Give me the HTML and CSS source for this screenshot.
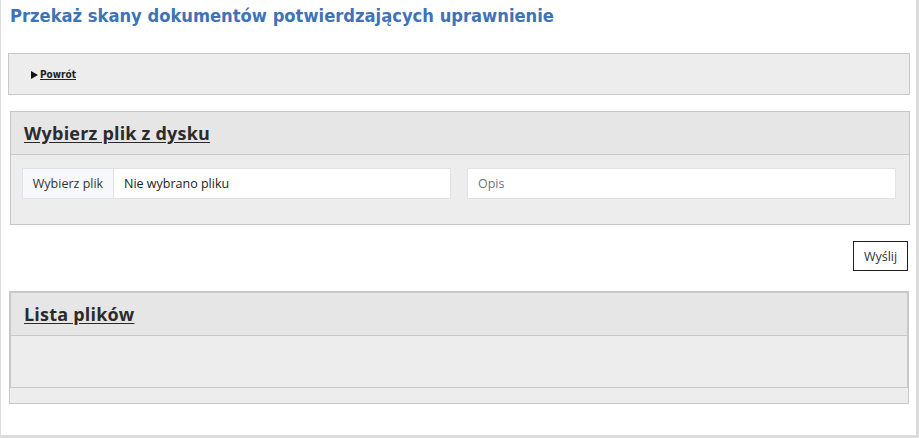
FILE: index.html
```html
<!DOCTYPE html>
<html lang="pl">
<head>
<meta charset="utf-8">
<title>Przekaż skany dokumentów</title>
<link rel="stylesheet" href="styles.css">
</head>
<body>
<div class="frame">
  <h1 class="title">Przekaż skany dokumentów potwierdzających uprawnienie</h1>
  <div class="nav-panel">
    <span class="arrow"></span><a class="back" href="#">Powrót</a>
  </div>
  <div class="panel upload">
    <div class="panel-head"><span class="panel-title">Wybierz plik z dysku</span></div>
    <div class="panel-body">
      <div class="fields">
        <div class="file-group">
          <span class="addon">Wybierz plik</span>
          <span class="file-name">Nie wybrano pliku</span>
        </div>
        <div class="desc">Opis</div>
      </div>
    </div>
  </div>
  <div class="actions">
    <button class="send" type="button">Wyślij</button>
  </div>
  <div class="list-wrap">
    <div class="panel list">
      <div class="panel-head"><span class="panel-title">Lista plików</span></div>
      <div class="panel-body list-body"></div>
    </div>
  </div>
</div>
</body>
</html>
```

FILE: styles.css
```css
html, body {
  margin: 0;
  padding: 0;
  background: #fff;
}
.frame {
  width: 919px;
  height: 438px;
  box-sizing: border-box;
  border-left: 1px solid #dcdcdc;
  border-right: 3px solid #dcdcdc;
  border-bottom: 3px solid #dcdcdc;
  padding: 0 6px 0 7px;
  font-family: "Open Sans", "Noto Sans", sans-serif;
  color: #333;
}
.title {
  margin: 0;
  height: 53px;
  box-sizing: border-box;
  padding: 4px 0 0 2px;
  font-family: "DejaVu Sans Condensed", "DejaVu Sans", Tahoma, sans-serif;
  font-stretch: condensed;
  font-weight: bold;
  font-size: 18.2px;
  line-height: 24px;
  color: #3e73b6;
}
.nav-panel {
  height: 42px;
  box-sizing: border-box;
  border: 1px solid #c8c8c8;
  background: #ededed;
  display: flex;
  align-items: center;
  padding: 1px 0 0 22px;
}
.arrow {
  width: 0;
  height: 0;
  border-top: 4px solid transparent;
  border-bottom: 4px solid transparent;
  border-left: 7px solid #111;
  margin-right: 2px;
}
.back {
  font-family: "DejaVu Sans Condensed", "DejaVu Sans", Tahoma, sans-serif;
  font-stretch: condensed;
  font-weight: bold;
  font-size: 10px;
  color: #222;
  text-decoration: underline;
}
.panel {
  border: 1px solid #c8c8c8;
  background: #ededed;
}
.upload {
  margin: 16px 0 0 2px;
}
.panel-head {
  height: 43px;
  box-sizing: border-box;
  background: #e6e6e6;
  border-bottom: 1px solid #c8c8c8;
  display: flex;
  align-items: center;
  padding: 0 0 0 13px;
}
.panel-title {
  font-size: 18px;
  font-weight: bold;
  color: #2b2b2b;
  text-decoration: underline;
  text-underline-offset: 2px;
  letter-spacing: 0.2px;
}
.panel-body {
  height: 69px;
  box-sizing: border-box;
  padding: 13px 12px 0 11px;
}
.fields {
  display: grid;
  grid-template-columns: 429px 429px;
  column-gap: 16px;
}
.file-group {
  display: flex;
  height: 31px;
  box-sizing: border-box;
  border: 1px solid #dfe3e8;
  background: #fff;
  font-size: 12.5px;
}
.addon {
  width: 90px;
  background: #f7f8fa;
  border-right: 1px solid #dfe3e8;
  display: flex;
  align-items: center;
  justify-content: center;
  color: #333;
}
.file-name {
  display: flex;
  align-items: center;
  padding-left: 10px;
  color: #222;
}
.desc {
  height: 31px;
  box-sizing: border-box;
  border: 1px solid #dfe3e8;
  background: #fff;
  display: flex;
  align-items: center;
  padding-left: 10px;
  font-size: 12.5px;
  color: #6c757d;
}
.actions {
  display: flex;
  justify-content: flex-end;
  padding: 16px 2px 0 0;
}
.send {
  width: 55px;
  height: 30px;
  border: 1px solid #222;
  background: #fff;
  font-family: "Open Sans", "Noto Sans", sans-serif;
  font-size: 12.5px;
  color: #333;
  padding: 0;
  margin: 0;
}
.list-wrap {
  margin: 20px 1px 0 1px;
  border: 1px solid #c8c8c8;
  background: #ededed;
  padding-bottom: 15px;
}
.list .panel-head {
  height: 43px;
}
.list-body {
  height: 51px;
  padding: 0;
}
```
